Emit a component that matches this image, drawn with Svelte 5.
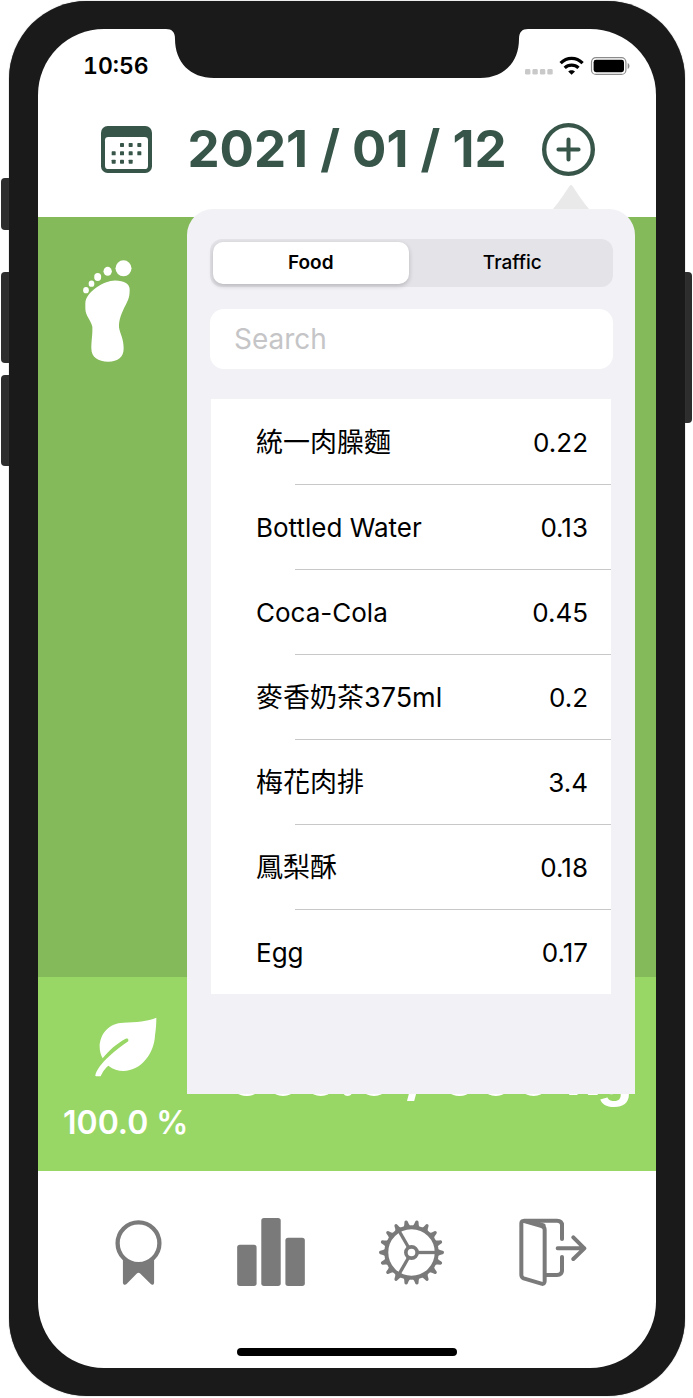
<script>
  const foods = [
    { name: '統一肉臊麵', value: '0.22', lang: 'zh-Hant' },
    { name: 'Bottled Water', value: '0.13', lang: 'en' },
    { name: 'Coca-Cola', value: '0.45', lang: 'en' },
    { name: '麥香奶茶375ml', value: '0.2', lang: 'zh-Hant' },
    { name: '梅花肉排', value: '3.4', lang: 'zh-Hant' },
    { name: '鳳梨酥', value: '0.18', lang: 'zh-Hant' },
    { name: 'Egg', value: '0.17', lang: 'en' }
  ];
  const calendarDots = [
    [367, 431], [393, 431], [419, 431],
    [342, 456], [367, 456], [393, 456], [419, 456],
    [342, 481], [367, 481], [393, 481]
  ];
  const teeth = Array.from({ length: 18 }, (_, i) => i * 20);
  let tab = $state('Food');
  let query = $state('');
</script>

<div class="device">
  <span class="key mute"></span>
  <span class="key up"></span>
  <span class="key down"></span>
  <span class="key power"></span>

  <div class="frame">
    <div class="screen">
      <svg class="notch" viewBox="0 0 362 50" width="362" height="50" aria-hidden="true">
        <path d="M0 0C6 0 9 3 9 10C9 33 24 49 48 49H314C338 49 353 33 353 10C353 3 356 0 362 0Z" fill="#1a1a1a" />
      </svg>

      <div class="status">
        <span class="time">10:56</span>
        <svg viewBox="0 0 106 20" width="106" height="20" aria-hidden="true">
          <g fill="#c9c9c9">
            <rect x="0" y="13" width="5.4" height="5.6" rx="1.4" />
            <rect x="7.4" y="13" width="5.4" height="5.6" rx="1.4" />
            <rect x="14.9" y="13" width="5.4" height="5.6" rx="1.4" />
            <rect x="22.3" y="13" width="5.4" height="5.6" rx="1.4" />
          </g>
          <g fill="none" stroke="#000" stroke-width="3.2">
            <path d="M35.6 7.2C42 .8 51.2 .8 57.6 7.2" />
            <path d="M39.7 11.9C43.5 8.2 49.7 8.2 53.5 11.9" />
          </g>
          <path d="M46.6 18.7L43.2 15.6C45.1 13.8 48.1 13.8 50 15.6Z" fill="#000" />
          <rect x="66.5" y="1.6" width="34.4" height="16.8" rx="4.5" fill="none" stroke="#8b8b8b" stroke-width="1.2" />
          <rect x="68.6" y="3.8" width="30.4" height="12.4" rx="2.4" fill="#000" />
          <path d="M102.7 7C105 8 105 12 102.7 13Z" fill="#8b8b8b" />
        </svg>
      </div>

      <header>
        <button aria-label="Calendar">
          <svg viewBox="304 374 153 141" width="51" height="47">
            <rect x="304" y="374" width="153" height="141" rx="20" fill="#375549" />
            <rect x="316" y="407" width="129" height="96" rx="10" fill="#fff" />
            {#each calendarDots as [x, y]}
              <rect x={x - 6} y={y - 6} width="12" height="12" rx="2" fill="#375549" />
            {/each}
          </svg>
        </button>
        <h1>2021 / 01 / 12</h1>
        <button aria-label="Add">
          <svg viewBox="589 367 158 158" width="53" height="53" fill="none" stroke="#375549" stroke-linecap="round">
            <circle cx="668" cy="446" r="72.5" stroke-width="13" />
            <path d="M638 446H698M668 416V476" stroke-width="12" />
          </svg>
        </button>
      </header>

      <main>
        <svg viewBox="130 60 147 306" width="49" height="102" fill="#fff" aria-hidden="true">
          <circle cx="251.5" cy="85" r="24" />
          <ellipse cx="204" cy="94" rx="12.5" ry="13.5" />
          <ellipse cx="174" cy="111" rx="10.5" ry="12" />
          <ellipse cx="155.5" cy="131" rx="8.5" ry="9.5" />
          <ellipse cx="139" cy="150.5" rx="8.5" ry="9.5" />
          <path d="M137 190C138 156 192 122 226 121.5C255 122 270 132 270 148C270 168 268 176 258 195C246 218 237 240 238 262C241 282 252 295 252 325C252 352 235 365 206 365C175 365 155 352 155 325C155 300 159 285 158 260C152 238 137 228 137 205Z" />
        </svg>
      </main>

      <section class="budget">
        <div class="share">
          <svg viewBox="167 140 186 180" width="62" height="60" fill="#fff" aria-hidden="true">
            <path d="M351 142C326 152 290 156 252 157C210 158 181 190 181 230C181 243 185 255 190 264C208 240 233 219 259 205C266 202 271 210 264 215C235 234 176 280 168 315C167 319 170 318 184 318C188 308 198 292 207 286C222 297 236 302 252 302C307 302 345 247 347 195C350 175 351 160 351 142Z" />
          </svg>
          <strong>100.0 %</strong>
        </div>
        <strong class="total">500.0 / 500 kg</strong>
      </section>

      <nav>
        <button aria-label="Awards">
          <svg viewBox="74 60 140 196" width="47" height="65">
            <circle cx="144" cy="130" r="63" fill="none" stroke="#7a7a7a" stroke-width="13" />
            <path d="M97 172C120 194 168 194 191 172V249C191 255 185 257 181 253L149 221Q144 217 139 221L108 253C104 257 97 255 97 249Z" fill="#7a7a7a" />
          </svg>
        </button>
        <button aria-label="Statistics">
          <svg viewBox="444 55 202 203" width="68" height="68" fill="#7a7a7a">
            <rect x="444" y="135" width="58" height="123" rx="8" />
            <rect x="516" y="55" width="58" height="203" rx="8" />
            <rect x="588" y="114" width="58" height="144" rx="8" />
          </svg>
        </button>
        <button aria-label="Settings">
          <svg viewBox="90 59 196 196" width="65" height="65" fill="none" stroke="#7a7a7a">
            <circle cx="188" cy="157" r="76" stroke-width="12" />
            <circle cx="188" cy="157" r="17" stroke-width="11" />
            {#each teeth as angle}
              <path d="M266 146Q274 151 282 152Q286 153 286 157Q286 161 282 162Q274 163 266 168Z" fill="#7a7a7a" stroke="none" transform="rotate({angle} 188 157)" />
            {/each}
            {#each [0, 120, 240] as angle}
              <path d="M208 157H262" stroke-width="10" transform="rotate({angle} 188 157)" />
            {/each}
          </svg>
        </button>
        <button aria-label="Sign out">
          <svg viewBox="508 54 204 204" width="68" height="68" fill="none" stroke="#7a7a7a" stroke-width="12" stroke-linecap="round" stroke-linejoin="round">
            <path d="M515 70Q515 61 524 63L576 78Q585 81 585 89V243Q585 254 575 251L522 235Q515 232 515 224Z" />
            <path d="M522 62H622Q637 62 637 76V118M587 225H622Q637 225 637 211V170" stroke-linecap="butt" />
            <path d="M637 76V117M637 211V171M624 145H704M671 112L704 145L671 177" />
            <path d="M548 66L582 76" />
          </svg>
        </button>
      </nav>

      <div class="home"></div>

      <section class="popover" aria-label="Add entry">
        <svg class="pointer" viewBox="0 0 36 24" width="36" height="24" aria-hidden="true">
          <path d="M0 24C6 17 12 8 16.5 1Q18 -1 19.5 1C24 8 30 17 36 24Z" fill="#e9e9e9" />
        </svg>
        <div class="segments">
          {#each ['Food', 'Traffic'] as item}
            <button class:active={tab === item} aria-pressed={tab === item} onclick={() => (tab = item)}>{item}</button>
          {/each}
        </div>
        <input type="search" placeholder="Search" aria-label="Search" bind:value={query} />
        <ul>
          {#each foods as food}
            <li><span lang={food.lang}>{food.name}</span><span>{food.value}</span></li>
          {/each}
        </ul>
      </section>
    </div>
  </div>
</div>

<style>
  :global(body) {
    margin: 0;
    background: #fff;
  }
  .device,
  .device * {
    box-sizing: border-box;
  }
  .device {
    position: relative;
    display: flex;
    min-height: 100vh;
    padding: 1px 8px 2px 9px;
    font-family: Inter, 'Noto Sans CJK TC', sans-serif;
  }
  .frame {
    position: relative;
    flex: 1;
    display: flex;
    min-width: 0;
    padding: 28px 29px;
    border-radius: 78px;
    background: #1a1a1a;
    box-shadow: 0 0 1px #555;
  }
  .screen {
    position: relative;
    flex: 1;
    display: flex;
    flex-direction: column;
    min-width: 0;
    border-radius: 66px;
    background: #fff;
  }
  .key {
    position: absolute;
    left: 1px;
    width: 12px;
    border-radius: 4px;
    background: #2d2d2d;
  }
  .mute {
    top: 178px;
    height: 52px;
  }
  .up {
    top: 272px;
    height: 91px;
  }
  .down {
    top: 375px;
    height: 91px;
  }
  .power {
    top: 272px;
    left: auto;
    right: 1px;
    height: 151px;
  }
  .notch {
    position: absolute;
    top: 0;
    left: 50%;
    margin-left: -181px;
  }
  button {
    padding: 0;
    border: 0;
    background: none;
    font: inherit;
    color: inherit;
    cursor: pointer;
  }
  svg {
    display: block;
  }
  .status {
    display: flex;
    align-items: center;
    justify-content: space-between;
    height: 52px;
    padding: 22px 25px 0 45px;
  }
  .time {
    font-size: 23px;
    line-height: 28px;
    font-weight: 600;
    font-variant-numeric: tabular-nums;
  }
  header {
    display: flex;
    align-items: center;
    justify-content: space-between;
    height: 136px;
    padding: 0 61px 0 63px;
  }
  h1 {
    margin: 0;
    font-size: 51px;
    line-height: 60px;
    font-weight: 700;
    color: #375549;
    white-space: nowrap;
  }
  main {
    flex: 1;
    padding: 43px 45px;
    background: #84ba59;
  }
  .budget {
    display: flex;
    gap: 40px;
    height: 194px;
    padding: 40px 25px 0;
    background: #98d765;
    color: #fff;
    white-space: nowrap;
  }
  .share {
    display: flex;
    flex-direction: column;
    align-items: center;
    gap: 26px;
    font-size: 32px;
    line-height: 40px;
  }
  .share strong {
    font-weight: 600;
  }
  .total {
    padding-top: 22px;
    font-size: 56px;
    line-height: 72px;
    font-weight: 700;
  }
  nav {
    display: flex;
    align-items: center;
    justify-content: space-between;
    height: 162px;
    padding: 0 69px 0 77px;
  }
  .home {
    align-self: center;
    width: 220px;
    height: 8px;
    margin: 15px 0 12px;
    border-radius: 4px;
    background: #000;
  }
  .popover {
    position: absolute;
    top: 180px;
    left: 149px;
    right: 21px;
    padding: 30px 22px 100px 23px;
    border-radius: 26px 26px 0 0;
    background: #f2f1f6;
  }
  .pointer {
    position: absolute;
    top: -24px;
    right: 46px;
  }
  .segments {
    display: grid;
    grid-template-columns: 1fr 1fr;
    gap: 6px;
    height: 48px;
    padding: 3px;
    border-radius: 12px;
    background: #e4e3e8;
    font-size: 19px;
    line-height: 24px;
    font-weight: 500;
  }
  .segments button {
    border-radius: 10px;
  }
  .segments .active {
    background: #fff;
    font-weight: 600;
    box-shadow: 0 2px 5px rgba(0, 0, 0, 0.2);
  }
  input {
    display: block;
    width: 100%;
    height: 60px;
    margin: 22px 0 30px;
    padding: 0 24px;
    border: 0;
    border-radius: 14px;
    outline: 0;
    background: #fff;
    font: inherit;
    font-size: 28px;
    appearance: none;
  }
  input::placeholder {
    color: #c5c5c7;
    opacity: 1;
  }
  ul {
    margin: 0 2px 0 1px;
    padding: 0;
    list-style: none;
    background: #fff;
  }
  li {
    position: relative;
    display: flex;
    align-items: center;
    justify-content: space-between;
    height: 85px;
    padding: 2px 23px 0 45px;
    font-size: 26px;
    line-height: 32px;
  }
  li :lang(zh-Hant) {
    font-size: 27px;
  }
  li + li::before {
    content: '';
    position: absolute;
    top: 0;
    left: 84px;
    right: 0;
    height: 1px;
    background: #c8c8ca;
  }
</style>
